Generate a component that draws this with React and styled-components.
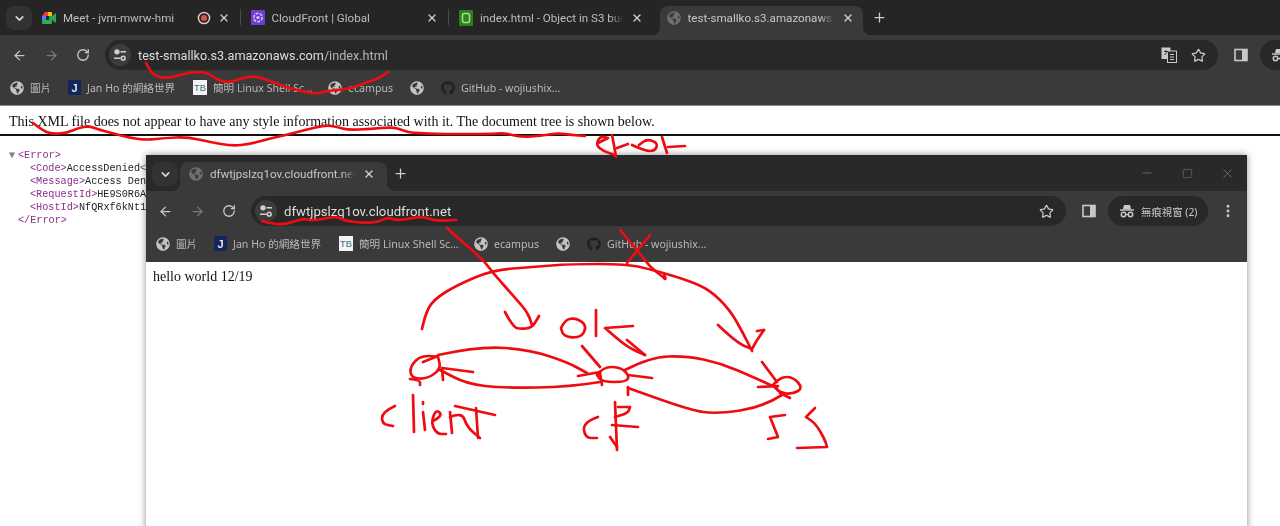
import React from "react";
import styled, { createGlobalStyle } from "styled-components";
import { ArrowLeft, ArrowRight, RotateCw, Star, X, Plus, ChevronDown, Minus, Square, EllipsisVertical } from "lucide-react";
import { FaGlobeAmericas, FaGithub } from "react-icons/fa";

const GlobalStyle = createGlobalStyle`
  html, body {
    margin: 0;
    padding: 0;
    background: #fff;
    overflow: hidden;
  }
  * { box-sizing: border-box; }
`;

const uiFont = `"Noto Sans", "Noto Sans CJK TC", sans-serif`;
const chromeFont = `Roboto, "Noto Sans CJK TC", sans-serif`;

const Screen = styled.div`
  position: relative;
  width: 1280px;
  height: 526px;
  overflow: hidden;
  background: #fff;
  font-family: ${uiFont};
  filter: blur(0.3px);
`;

const Chrome = styled.div`
  width: 100%;
  overflow: hidden;
`;

const TabStrip = styled.div`
  display: flex;
  align-items: flex-end;
  height: ${p => p.$height}px;
  padding-left: ${p => p.$left}px;
  background: ${p => p.$bg};
`;

const TabSearch = styled.button`
  flex: none;
  align-self: flex-start;
  display: flex;
  align-items: center;
  justify-content: center;
  width: 26px;
  height: 24px;
  margin: ${p => p.$top}px 0 0 0;
  padding: 0;
  border: 0;
  border-radius: 8px;
  background: #323232;
  color: #d6d6d6;
`;

const Tab = styled.div`
  position: relative;
  flex: none;
  display: flex;
  align-items: center;
  gap: 7px;
  width: ${p => p.$width}px;
  height: 29px;
  margin-left: ${p => p.$offset || 0}px;
  padding: 0 ${p => p.$pr}px 6px ${p => p.$pl}px;
  color: ${p => (p.$active ? "#c6c6c6" : "#bdbdbd")};
  font-family: ${chromeFont};
  font-size: 11.6px;
  white-space: nowrap;
  &::after {
    content: "";
    display: ${p => (p.$divider ? "block" : "none")};
    position: absolute;
    right: 0;
    top: 3px;
    height: 16px;
    width: 1px;
    background: #4a4a4a;
  }
`;

const ActiveTab = styled(Tab)`
  background: #3a3a3a;
  border-radius: 8px 8px 0 0;
  &::before,
  &::after {
    content: "";
    display: block;
    position: absolute;
    bottom: 0;
    top: auto;
    width: 8px;
    height: 8px;
  }
  &::before {
    left: -8px;
    right: auto;
    background: radial-gradient(circle at 0 0, transparent 8px, #3a3a3a 8.5px);
  }
  &::after {
    right: -8px;
    background: radial-gradient(circle at 100% 0, transparent 8px, #3a3a3a 8.5px);
  }
`;

const TabTitle = styled.span`
  flex: 1;
  min-width: 0;
  overflow: hidden;
  -webkit-mask-image: linear-gradient(to right, #000 90%, transparent);
  mask-image: linear-gradient(to right, #000 90%, transparent);
`;

const TabClose = styled(X)`
  flex: none;
  width: 12px;
  height: 12px;
  color: #d4d4d4;
  stroke-width: 2.6;
`;

const NewTab = styled(Plus)`
  flex: none;
  align-self: center;
  width: 15px;
  height: 15px;
  margin-left: ${p => p.$left}px;
  color: #cfcfcf;
  stroke-width: 2;
`;

const WindowControls = styled.div`
  align-self: center;
  display: flex;
  align-items: center;
  margin-left: auto;
  color: #8d8d8d;
`;

const WindowControl = styled.span`
  display: flex;
  align-items: center;
  justify-content: center;
  width: 40px;
  height: 24px;
`;

const Toolbar = styled.div`
  display: flex;
  align-items: center;
  height: 35px;
  padding: 5px 0 0 3px;
  background: #3a3a3a;
`;

const NavButton = styled.span`
  flex: none;
  display: flex;
  align-items: center;
  justify-content: center;
  width: 32px;
  height: 30px;
  color: ${p => (p.$dim ? "#7a7a7a" : "#c9c9c9")};
`;

const AddressBar = styled.div`
  flex: none;
  display: flex;
  align-items: center;
  width: ${p => p.$width}px;
  height: 30px;
  margin-left: 6px;
  padding-left: 4px;
  border-radius: 15px;
  background: #282828;
  font-family: ${chromeFont};
  font-size: ${p => p.$size}px;
`;

const SiteInfo = styled.span`
  flex: none;
  display: flex;
  align-items: center;
  justify-content: center;
  width: 22px;
  height: 22px;
  margin-right: 7px;
  border-radius: 50%;
  background: #3c3c3c;
  color: #d2d2d2;
`;

const Host = styled.span`
  color: #dedede;
`;

const Path = styled.span`
  color: #b4b4b4;
`;

const BarActions = styled.div`
  display: flex;
  align-items: center;
  gap: 14px;
  margin-left: auto;
  padding-right: 12px;
  color: #c9c9c9;
`;

const PanelSlot = styled.span`
  flex: none;
  display: flex;
  align-items: center;
  justify-content: center;
  width: 42px;
  padding-left: 4px;
  color: #c9c9c9;
`;

const Profile = styled.div`
  flex: none;
  display: flex;
  align-items: center;
  gap: 6px;
  width: 100px;
  height: 30px;
  padding-left: 11px;
  border-radius: 15px;
  background: #282828;
  color: #c9c9c9;
  font-size: 10.4px;
  white-space: nowrap;
`;

const MenuSlot = styled.span`
  flex: none;
  display: flex;
  justify-content: center;
  width: 40px;
  color: #c9c9c9;
`;

const BookmarkBar = styled.div`
  display: flex;
  align-items: center;
  height: ${p => p.$height}px;
  padding-left: 10px;
  background: #3a3a3a;
  border-bottom: 1px solid ${p => p.$line};
`;

const Bookmark = styled.div`
  flex: none;
  display: flex;
  align-items: center;
  gap: ${p => p.$gap}px;
  width: ${p => p.$width}px;
  color: #b9b9b9;
  font-size: 10.6px;
  white-space: nowrap;
`;

const JanIcon = styled.span`
  flex: none;
  display: flex;
  align-items: center;
  justify-content: center;
  width: 13px;
  height: 15px;
  background: #12285c;
  color: #e8e8e8;
  font-size: 11px;
  font-weight: 700;
  font-family: "Liberation Sans", sans-serif;
`;

const TbIcon = styled.span`
  flex: none;
  display: flex;
  align-items: center;
  justify-content: center;
  width: 14px;
  height: 15px;
  background: #f4f4f4;
  color: #2d6e72;
  font-size: 9.5px;
  font-family: "Liberation Sans", sans-serif;
`;

const Page = styled.div`
  padding: 8px 0 0 9px;
  color: #111;
`;

const XmlNotice = styled.div`
  font-family: "Liberation Serif", serif;
  font-size: 14px;
  line-height: 16px;
  white-space: nowrap;
`;

const NoticeRule = styled.div`
  height: 2px;
  margin: 4px 0 0 -9px;
  background: #111;
`;

const Tree = styled.div`
  margin-top: 13px;
  font-family: "Liberation Mono", monospace;
  font-size: 10.2px;
  line-height: 13px;
  color: #222;
`;

const TreeLine = styled.div`
  display: flex;
  align-items: center;
  padding-left: ${p => p.$indent}px;
  white-space: nowrap;
`;

const Fold = styled.span`
  width: 9px;
  color: #7c7c7c;
  font-size: 10px;
`;

const Tag = styled.span`
  color: #8a2e8a;
`;

const PopupWindow = styled.div`
  position: absolute;
  left: 146px;
  top: 155px;
  width: 1101px;
  height: 400px;
  background: #fff;
  box-shadow: 0 0 7px rgba(0, 0, 0, 0.45);
`;

const PopupPage = styled.div`
  padding: 7px 0 0 7px;
  color: #111;
  font-family: "Liberation Serif", serif;
  font-size: 14px;
  line-height: 16px;
`;

const Ink = styled.svg`
  position: absolute;
  left: 0;
  top: 0;
  pointer-events: none;
`;

const Favicon = styled.svg`
  flex: none;
`;

const GlobeGlyph = styled(FaGlobeAmericas)`
  flex: none;
`;

const GithubGlyph = styled(FaGithub)`
  flex: none;
`;

const Globe = ({ size = 14, color = "#c3c3c3" }) => <GlobeGlyph size={size} color={color} />;

const TuneIcon = () => (
  <svg width="14" height="14" viewBox="0 0 14 14" fill="none" stroke="currentColor" strokeWidth="1.5">
    <circle cx="4" cy="3.8" r="1.9" fill="currentColor" />
    <path d="M7.5 3.8H13M1 10.2h6.5" />
    <circle cx="10.2" cy="10.2" r="1.9" />
  </svg>
);

const MeetIcon = () => (
  <Favicon width="14" height="14" viewBox="0 0 14 14">
    <path d="M3 1h3v4H0z" fill="#ea4335" />
    <rect x="6" y="1" width="4" height="4" fill="#fbbc04" />
    <rect x="0" y="5" width="4" height="4" fill="#4285f4" />
    <rect x="0" y="9" width="10" height="4" rx="1" fill="#34a853" />
    <path d="M6 5h4v4H6z" fill="#1ea362" />
    <path d="M10 5l4-3v10l-4-3z" fill="#2fa84f" />
    <rect x="4" y="5" width="3" height="4" fill="#262626" />
  </Favicon>
);

const RecordIcon = () => (
  <Favicon width="14" height="14" viewBox="0 0 14 14">
    <circle cx="7" cy="7" r="5.6" fill="none" stroke="#e6c7c4" strokeWidth="1.5" />
    <circle cx="7" cy="7" r="3" fill="#d9534d" />
  </Favicon>
);

const CloudFrontIcon = () => (
  <Favicon width="14" height="15" viewBox="0 0 14 15">
    <rect width="14" height="15" rx="1" fill="#6b3fd4" />
    <circle cx="7" cy="7.5" r="4.2" fill="none" stroke="#d9c9f7" strokeWidth="1.5" strokeDasharray="3 1.2" />
    <circle cx="7" cy="7.5" r="1.6" fill="#d9c9f7" />
  </Favicon>
);

const S3Icon = () => (
  <Favicon width="14" height="16" viewBox="0 0 14 16">
    <rect width="14" height="16" rx="1" fill="#2f7f1e" />
    <rect x="3.5" y="3.5" width="7" height="9" rx="2" fill="none" stroke="#a8e08e" strokeWidth="1.5" />
  </Favicon>
);

const TranslateIcon = () => (
  <svg width="16" height="16" viewBox="0 0 16 16">
    <rect x="0.5" y="0.5" width="9" height="11.5" fill="#c9c9c9" />
    <rect x="6.5" y="4" width="9" height="11.5" fill="#282828" stroke="#c9c9c9" />
    <path d="M3 4.5h4M5 3v1.5M3.5 8l3-3.5" stroke="#3a3a3a" strokeWidth="1" fill="none" />
    <path d="M9 7.5h4M9 10h4M9 12.5h4" stroke="#c9c9c9" strokeWidth="1" fill="none" />
  </svg>
);

const SidePanelIcon = () => (
  <svg width="14" height="14" viewBox="0 0 14 14">
    <rect x="1" y="1.5" width="12" height="11" fill="none" stroke="currentColor" strokeWidth="1.6" />
    <rect x="8" y="1.5" width="5" height="11" fill="currentColor" />
  </svg>
);

const IncognitoIcon = () => (
  <Favicon width="16" height="14" viewBox="0 0 16 14" fill="none" stroke="currentColor">
    <path d="M5 1h6l1 4H4z" fill="currentColor" stroke="none" />
    <path d="M1 6h14" strokeWidth="1.5" />
    <circle cx="4.5" cy="10.5" r="2.2" strokeWidth="1.5" />
    <circle cx="11.5" cy="10.5" r="2.2" strokeWidth="1.5" />
    <path d="M6.7 10.5h2.6" strokeWidth="1.2" />
  </Favicon>
);

const BookmarkRow = ({ height, line }) => (
  <BookmarkBar $height={height} $line={line}>
    <Bookmark $width={58} $gap={6}><Globe />圖片</Bookmark>
    <Bookmark $width={125} $gap={6}><JanIcon>J</JanIcon>Jan Ho 的網絡世界</Bookmark>
    <Bookmark $width={135} $gap={6}><TbIcon>TB</TbIcon>簡明 Linux Shell Sc...</Bookmark>
    <Bookmark $width={82} $gap={6}><Globe />ecampus</Bookmark>
    <Bookmark $width={31} $gap={0}><Globe /></Bookmark>
    <Bookmark $width={140} $gap={6}><GithubGlyph size={14} color="#1f1f1f" />GitHub - wojiushix...</Bookmark>
  </BookmarkBar>
);

const NavButtons = () => (
  <>
    <NavButton><ArrowLeft size={15} strokeWidth={2} /></NavButton>
    <NavButton $dim><ArrowRight size={15} strokeWidth={2} /></NavButton>
    <NavButton><RotateCw size={14} strokeWidth={2.2} /></NavButton>
  </>
);

// freehand red marks, points in page pixels; a doubled point makes a sharp corner
const strokes = [
  "146,63 150,71 157,77 170,78 190,72 207,72 217,80 230,83 250,75 268,80 286,87 300,91 316,94 326,91 339,90 352,88 367,82 378,79 388,72",
  "33,123 42,130 51,134 67,133 78,128 89,126 100,130 112,133 130,138 147,140 165,138 187,137 210,142 232,146 250,144 268,139 286,135 305,130 326,125 337,127 348,130 370,129 393,127 402,130 411,133 446,134 490,134 504,133 512,135 522,137 540,136 558,133 572,135 585,136",
  "598,143 608,138 608,138 600,136 596,145 603,151 615,155",
  "612,135 614,145 616,157",
  "617,148 628,144",
  "632,145 645,151 655,151 658,143 647,139 639,145",
  "662,137 667,153",
  "668,147 685,146",
  "262,221 268,223 285,225 303,218 312,221 337,216 345,221 365,223 378,222 388,217 398,221 422,216 435,221 456,220",
  "447,228 458,238 472,250 485,262 493,273 517,300 528,313 532,325",
  "505,312 513,327 520,329 532,328 539,316",
  "422,329 425,315 433,300 457,285 493,270 533,267 570,264 627,264 653,270 687,280 710,290 730,310 743,333 752,351",
  "718,325 737,343 752,349 752,349 757,340 764,330",
  "757,331 764,330",
  "620,230 637,250 650,267 663,277 666,280 664,274",
  "650,235 627,263",
  "561,328 565,320 574,318 583,322 586,328 582,336 572,338 563,335 561,328",
  "596,310 596,336",
  "633,326 605,328 605,328 627,347 645,355",
  "627,340 645,355",
  "438,357 423,354 410,366 411,378 427,379 441,369 438,357",
  "423,362 438,356",
  "410,379 420,380 420,385",
  "438,355 480,346 530,350 567,362 587,373",
  "582,346 600,367",
  "578,376 600,372",
  "600,382 570,387 503,388 467,384 440,370",
  "442,368 473,372",
  "442,368 443,380",
  "597,375 603,367 620,367 629,375 627,382 602,382 597,375",
  "600,373 602,385",
  "625,370 650,357 687,356 720,363 753,377 777,388",
  "762,362 777,382",
  "758,387 778,386",
  "628,375 652,378",
  "773,385 780,377 793,377 803,388 793,394 780,393 773,385",
  "780,393 790,398",
  "782,395 763,407 717,414 690,410 628,388",
  "628,387 628,395",
  "395,406 382,412 382,424 393,426",
  "413,395 414,432",
  "423,412 425,430",
  "423,402 423,404",
  "433,421 443,416 436,409 431,423 437,434 446,434",
  "450,412 452,433",
  "450,417 462,412 467,427 480,438",
  "455,406 495,415",
  "476,408 478,438",
  "598,417 583,422 585,438 597,438",
  "615,402 617,450",
  "618,407 630,407 630,407 628,413 615,417",
  "612,425 638,427",
  "610,437 617,447",
  "785,415 770,417 770,417 778,437 778,437 768,439",
  "815,408 806,417 806,417 816,424 825,440 827,447 827,447 797,448",
];

const smooth = points => {
  const pts = points.split(" ").map(p => p.split(",").map(Number));
  let d = `M${pts[0][0]} ${pts[0][1]}`;
  for (let i = 1; i < pts.length - 1; i++) {
    const mx = (pts[i][0] + pts[i + 1][0]) / 2;
    const my = (pts[i][1] + pts[i + 1][1]) / 2;
    d += ` Q${pts[i][0]} ${pts[i][1]} ${mx} ${my}`;
  }
  const last = pts[pts.length - 1];
  return `${d} L${last[0]} ${last[1]}`;
};

export default function App() {
  return (
    <Screen>
      <GlobalStyle />
      <Chrome>
        <TabStrip $height={35} $left={6} $bg="#252525">
          <TabSearch $top={6}><ChevronDown size={13} strokeWidth={3} /></TabSearch>
          <Tab $width={208.5} $pl={10} $pr={11} $divider>
            <MeetIcon />
            <TabTitle>Meet - jvm-mwrw-hmi</TabTitle>
            <RecordIcon />
            <TabClose />
          </Tab>
          <Tab $width={208.5} $pl={10} $pr={11} $divider>
            <CloudFrontIcon />
            <TabTitle>CloudFront | Global</TabTitle>
            <TabClose />
          </Tab>
          <Tab $width={211} $pl={10} $pr={17}>
            <S3Icon />
            <TabTitle>index.html - Object in S3 bucket</TabTitle>
            <TabClose />
          </Tab>
          <ActiveTab $active $width={203} $pl={6.5} $pr={9}>
            <Globe color="#6f6f6f" />
            <TabTitle>test-smallko.s3.amazonaws.com/index.html</TabTitle>
            <TabClose />
          </ActiveTab>
          <NewTab $left={9} />
        </TabStrip>
        <Toolbar>
          <NavButtons />
          <AddressBar $width={1113} $size={12.65}>
            <SiteInfo><TuneIcon /></SiteInfo>
            <Host>test-smallko.s3.amazonaws.com</Host>
            <Path>/index.html</Path>
            <BarActions>
              <TranslateIcon />
              <Star size={15} strokeWidth={2} />
            </BarActions>
          </AddressBar>
          <PanelSlot><SidePanelIcon /></PanelSlot>
          <Profile><IncognitoIcon />無痕視窗 (2)</Profile>
        </Toolbar>
        <BookmarkRow height={36} line="#8a8a8a" />
      </Chrome>
      <Page>
        <XmlNotice>This XML file does not appear to have any style information associated with it. The document tree is shown below.</XmlNotice>
        <NoticeRule />
        <Tree>
          <TreeLine $indent={0}><Fold>▼</Fold><Tag>&lt;Error&gt;</Tag></TreeLine>
          <TreeLine $indent={21}><Tag>&lt;Code&gt;</Tag>AccessDenied<Tag>&lt;/Code&gt;</Tag></TreeLine>
          <TreeLine $indent={21}><Tag>&lt;Message&gt;</Tag>Access Denied<Tag>&lt;/Message&gt;</Tag></TreeLine>
          <TreeLine $indent={21}><Tag>&lt;RequestId&gt;</Tag>HE9S0R6A<Tag>&lt;/RequestId&gt;</Tag></TreeLine>
          <TreeLine $indent={21}><Tag>&lt;HostId&gt;</Tag>NfQRxf6kNt1<Tag>&lt;/HostId&gt;</Tag></TreeLine>
          <TreeLine $indent={9}><Tag>&lt;/Error&gt;</Tag></TreeLine>
        </Tree>
      </Page>
      <PopupWindow>
        <TabStrip $height={36} $left={6} $bg="#292929">
          <TabSearch $top={7}><ChevronDown size={13} strokeWidth={3} /></TabSearch>
          <ActiveTab $active $width={207} $offset={2} $pl={9} $pr={12}>
            <Globe color="#6f6f6f" />
            <TabTitle>dfwtjpslzq1ov.cloudfront.net</TabTitle>
            <TabClose />
          </ActiveTab>
          <NewTab $left={6} />
          <WindowControls>
            <WindowControl><Minus size={14} strokeWidth={1} /></WindowControl>
            <WindowControl><Square size={11} strokeWidth={1} /></WindowControl>
            <WindowControl><X size={15} strokeWidth={1} /></WindowControl>
          </WindowControls>
        </TabStrip>
        <Toolbar>
          <NavButtons />
          <AddressBar $width={815} $size={13.2}>
            <SiteInfo><TuneIcon /></SiteInfo>
            <Host>dfwtjpslzq1ov.cloudfront.net</Host>
            <BarActions>
              <Star size={15} strokeWidth={2} />
            </BarActions>
          </AddressBar>
          <PanelSlot><SidePanelIcon /></PanelSlot>
          <Profile><IncognitoIcon />無痕視窗 (2)</Profile>
          <MenuSlot><EllipsisVertical size={16} strokeWidth={2.4} /></MenuSlot>
        </Toolbar>
        <BookmarkRow height={36} line="#3a3a3a" />
        <PopupPage>hello world 12/19</PopupPage>
      </PopupWindow>
      <Ink width="1280" height="526" viewBox="0 0 1280 526" fill="none" stroke="#ee0c12" strokeWidth="2.7" strokeLinecap="round" strokeLinejoin="round">
        {strokes.map((s, i) => <path key={i} d={smooth(s)} />)}
      </Ink>
    </Screen>
  );
}
